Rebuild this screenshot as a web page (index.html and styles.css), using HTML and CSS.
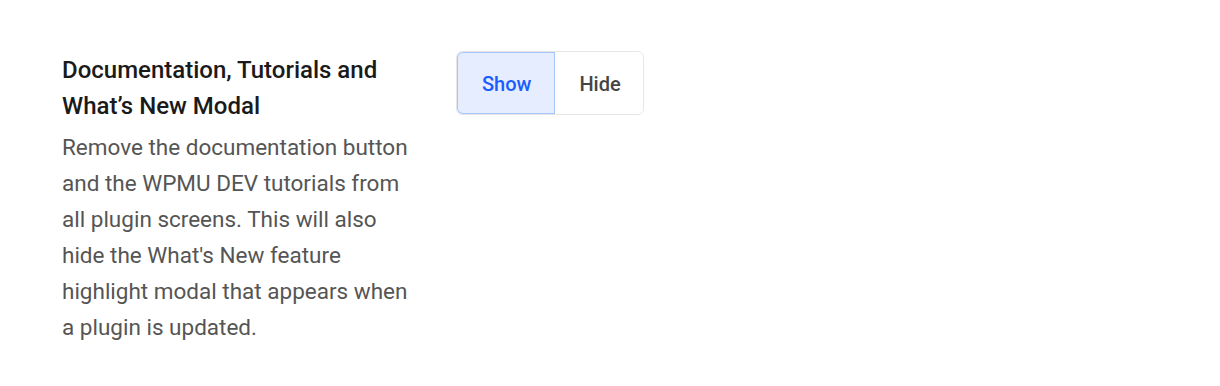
FILE: index.html
```html
<!DOCTYPE html>
<html lang="en">
<head>
  <meta charset="UTF-8" />
  <title>Settings</title>
  <link rel="stylesheet" href="styles.css">
</head>
<body>
  <div class="setting-row">
    <div class="setting-label">
      <h4>Documentation, Tutorials and What’s New Modal</h4>
      <p>Remove the documentation button and the WPMU DEV tutorials from all plugin screens. This will also hide the What's New feature highlight modal that appears when a plugin is updated.</p>
    </div>
    <div class="tabs">
      <button class="tab active">Show</button>
      <button class="tab">Hide</button>
    </div>
  </div>
</body>
</html>
```

FILE: styles.css
```css
body {
  font-family: Roboto, Arial, sans-serif;
  margin: 0;
  background: #fff;
}
.setting-row {
  display: flex;
  align-items: flex-start;
  gap: 38px;
  padding: 52px 62px;
}
.setting-label {
  width: 356px;
}
.setting-label h4 {
  margin: 0 0 5px;
  font-size: 24px;
  font-weight: 500;
  line-height: 36px;
  color: #1a1a1a;
}
.setting-label p {
  margin: 0;
  font-size: 22.5px;
  line-height: 36px;
  color: #555;
}
.tabs {
  display: flex;
  margin-top: -1px;
  border: 1px solid #e6e6e6;
  border-radius: 6px;
  overflow: hidden;
}
.tab {
  font-family: Roboto, Arial, sans-serif;
  font-size: 20px;
  font-weight: 500;
  height: 62px;
  padding: 2px 22px 0 24px;
  border: none;
  background: #fff;
  color: #444;
  cursor: pointer;
}
.tab.active {
  padding: 2px 24px 0 25px;
  background: #e6edff;
  color: #1a5cff;
  box-shadow: inset 0 0 0 1px #a6c4ff;
  border-radius: 6px 0 0 6px;
}
```
